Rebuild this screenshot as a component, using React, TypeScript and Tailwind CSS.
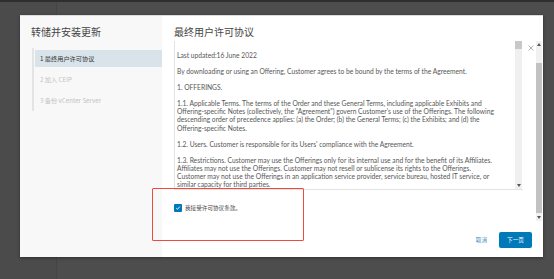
import React from 'react';

const steps = [
  { label: '1 最终用户许可协议', active: true },
  { label: '2 加入 CEIP', active: false },
  { label: '3 备份 vCenter Server', active: false },
];

const paragraphs: string[][] = [
  ['Last updated:16 June 2022'],
  ['By downloading or using an Offering, Customer agrees to be bound by the terms of the Agreement.'],
  ['1. OFFERINGS.'],
  [
    '1.1. Applicable Terms. The terms of the Order and these General Terms, including applicable Exhibits and',
    'Offering-specific Notes (collectively, the "Agreement") govern Customer\'s use of the Offerings. The following',
    'descending order of precedence applies: (a) the Order; (b) the General Terms; (c) the Exhibits; and (d) the',
    'Offering-specific Notes.',
  ],
  ["1.2. Users. Customer is responsible for its Users' compliance with the Agreement."],
  [
    '1.3. Restrictions. Customer may use the Offerings only for its internal use and for the benefit of its Affiliates.',
    'Affiliates may not use the Offerings. Customer may not resell or sublicense its rights to the Offerings.',
    'Customer may not use the Offerings in an application service provider, service bureau, hosted IT service, or',
    'similar capacity for third parties.',
  ],
];

const ArrowUp = () => (
  <svg width="4" height="3" viewBox="0 0 4 3">
    <path d="M0 3 L2 0 L4 3 Z" fill="#555" />
  </svg>
);

const ArrowDown = () => (
  <svg width="4" height="3" viewBox="0 0 4 3">
    <path d="M0 0 L2 3 L4 0 Z" fill="#555" />
  </svg>
);

const App = () => {
  return (
    <div className="relative w-[554px] h-[279px] overflow-hidden bg-[#4c4c4c] font-['Lato','Noto_Sans_CJK_SC',sans-serif]">
      {/* page behind the dialog */}
      <div className="h-[2px] bg-[#2e2e2e]" />
      <div className="flex h-[277px]">
        <div className="w-[57px] border-r border-[#454545] bg-[#4b4b4b]" />
        <div className="flex-1 bg-[#4d4d4d]" />
      </div>

      {/* dialog */}
      <div className="absolute left-[20px] top-[15px] w-[523px] h-[242px] bg-white flex shadow-[0_1px_3px_rgba(0,0,0,0.4)] border-t border-[#dcdcdc]">
        {/* steps */}
        <div className="w-[142px] bg-[#f8f8f8] pt-[10px]">
          <div className="pl-[11px] text-[10px] leading-[12px] text-[#444] font-['Noto_Sans_CJK_SC',sans-serif]">
            转储并安装更新
          </div>
          <div className="ml-[12px] mt-[10px] border-l-2 border-[#e4e4e4] pt-[2px] pb-[2px] flex flex-col gap-[4px]">
            {steps.map((s) => (
              <div
                key={s.label}
                className={
                  s.active
                    ? 'ml-[1px] h-[17px] flex items-center pl-[5px] bg-[#d9e4ea] text-[6.2px] text-[#333] font-[\'Noto_Sans_CJK_SC\',sans-serif]'
                    : 'ml-[1px] h-[17px] flex items-center pl-[5px] text-[6.2px] text-[#c2c2c2] font-[\'Noto_Sans_CJK_SC\',sans-serif]'
                }
              >
                {s.label}
              </div>
            ))}
          </div>
        </div>

        {/* content */}
        <div className="relative flex-1 flex flex-col pl-[12px] pr-[20px] pt-[10px] pb-[9px]">
          <div className="flex items-center justify-between">
            <div className="text-[10px] leading-[12px] text-[#444] font-['Noto_Sans_CJK_SC',sans-serif]">
              最终用户许可协议
            </div>
          </div>

          <div className="mt-[3px] h-[149px] flex border-l border-b border-[#e3e3e3]">
            <div className="flex-1 overflow-hidden pl-[2px] pt-[10px] text-[6.7px] leading-[8.2px] text-[#575757]">
              {paragraphs.map((p, i) => (
                <div key={i} className="mb-[7.8px]">
                  {p.map((line) => (
                    <div key={line} className="whitespace-nowrap">
                      {line}
                    </div>
                  ))}
                </div>
              ))}
            </div>
            <div className="w-[7px] mr-[1px] bg-[#f0f0f0] flex flex-col justify-between">
              <div className="h-[8px] bg-[#c8c8c8]" />
              <div className="h-[8px] flex items-center justify-center">
                <ArrowDown />
              </div>
            </div>
          </div>

          <label className="mt-[14px] flex items-center gap-[3px]">
            <span className="w-[8px] h-[8px] rounded-[1px] bg-[#0079b8] flex items-center justify-center">
              <svg width="6" height="6" viewBox="0 0 6 6">
                <path d="M1.2 3.1 L2.5 4.3 L4.8 1.6" stroke="white" strokeWidth="0.9" fill="none" />
              </svg>
            </span>
            <span className="text-[5.6px] leading-[8px] text-[#444] font-['Noto_Sans_CJK_SC',sans-serif]">
              我接受许可协议条款。
            </span>
          </label>

          <div className="mt-auto flex items-center justify-end gap-[9px] -mr-[9px]">
            <button className="h-[16px] px-[3px] text-[5.6px] text-[#3d8fc4] font-['Noto_Sans_CJK_SC',sans-serif]">
              取消
            </button>
            <button className="w-[33px] h-[16px] rounded-[2px] bg-[#0079b8] text-[5.6px] text-white font-['Noto_Sans_CJK_SC',sans-serif]">
              下一页
            </button>
          </div>

          {/* close */}
          <svg className="absolute right-[9px] top-[29px]" width="6" height="6" viewBox="0 0 6 6">
            <path d="M0.5 0.5 L5.5 5.5 M5.5 0.5 L0.5 5.5" stroke="#999" strokeWidth="0.8" />
          </svg>

          {/* dialog scrollbar */}
          <div className="absolute right-[1px] top-[25px] w-[6px] h-[180px] bg-[#f1f1f1] flex flex-col">
            <div className="h-[22px] flex justify-center pt-[2px]">
              <ArrowUp />
            </div>
            <div className="flex-1 bg-[#c2c2c2]" />
            <div className="h-[8px] flex items-center justify-center">
              <ArrowDown />
            </div>
          </div>
        </div>
      </div>

      {/* annotation */}
      <div className="absolute left-[152px] top-[188px] w-[152px] h-[53px] border-[1.5px] border-[#f04a40] rounded-[1px]" />
    </div>
  );
};

export default App;
